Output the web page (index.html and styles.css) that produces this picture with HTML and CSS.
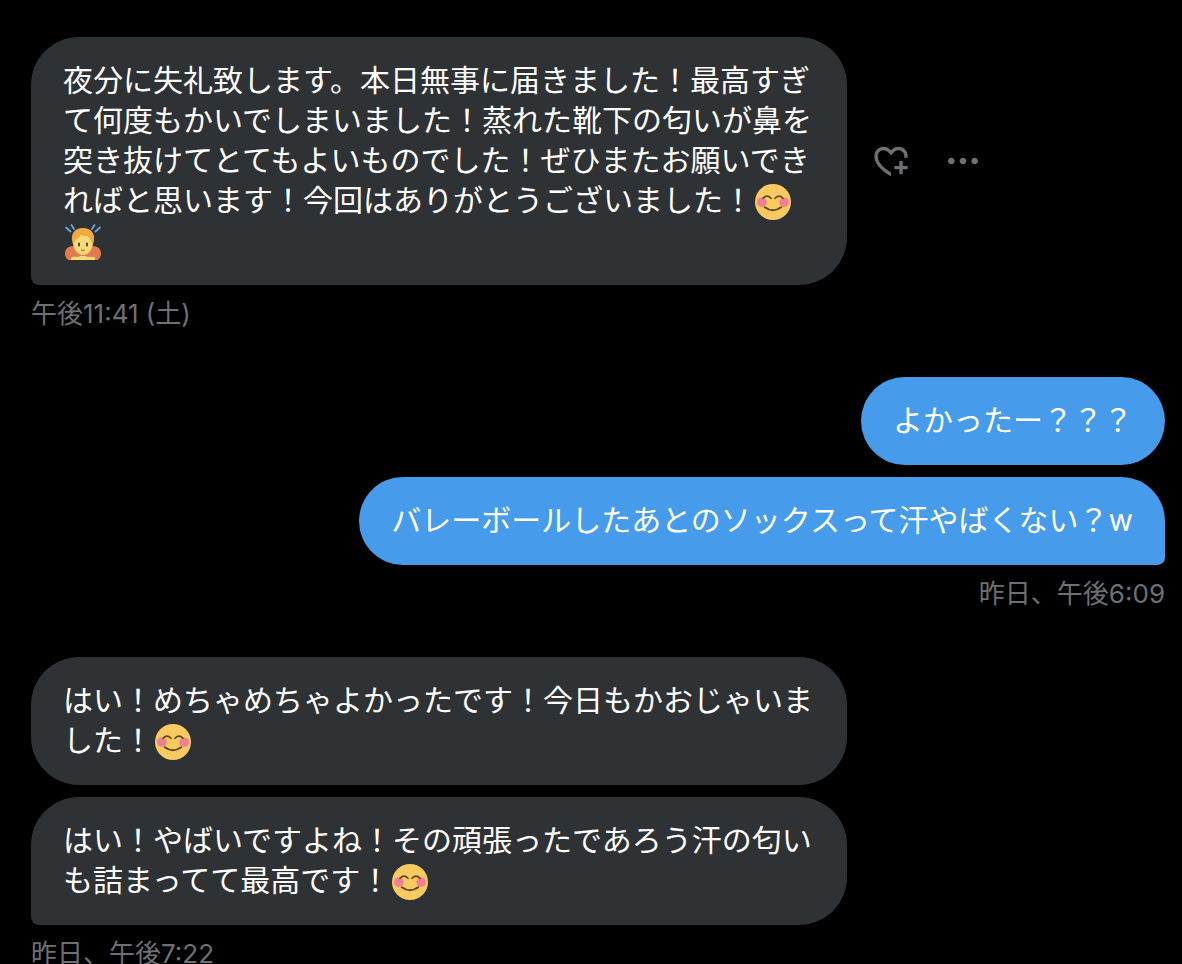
FILE: index.html
```html
<!DOCTYPE html>
<html lang="ja">
<head>
<meta charset="utf-8">
<meta name="viewport" content="width=device-width, initial-scale=1">
<title>メッセージ</title>
<link rel="stylesheet" href="styles.css">
</head>
<body>
<svg class="symbols" aria-hidden="true">
  <symbol id="smile" viewBox="0 0 36 36">
    <circle cx="18" cy="18" r="18" fill="#f8ca60"/>
    <circle cx="6.800" cy="18.200" r="4.800" fill="#ee7f96"/>
    <circle cx="29.200" cy="18.200" r="4.800" fill="#ee7f96"/>
    <g fill="none" stroke="#624710" stroke-linecap="round">
      <path d="M8 14.300Q12 10 16 14.300M20 14.300Q24 10 28 14.300" stroke-width="1.600"/>
      <path d="M9.800 23.300Q18 29.300 26.200 23.300" stroke-width="2"/>
    </g>
  </symbol>
  <symbol id="bow" viewBox="0 0 36 36">
    <path d="M9 22C3 22 0 25 0 29.500 0 33 2 36 4.500 36h27c2.500 0 4.500-3 4.500-6.500 0-4.500-3-7.500-9-7.500z" fill="#e27a50"/>
    <path d="M7 33c3-.500 6 .500 8.500-1h5c2.500 1.500 5.500.500 8.500 1 1.500.500 1.500 2 .500 3h-23c-1-1-1-2.500.500-3z" fill="#f8d978"/>
    <path d="M7.500 14C7.500 8 12 6 18 6s10.500 2 10.500 8c0 10-4 17-10.500 17S7.500 24 7.500 14z" fill="#f8d978"/>
    <path d="M7.500 18.500C5 9 10.500 4 18 4s13 5 10.500 14.500c-.500 1.500-1.500 1-2-.500-.700-2.500-2-4.500-4.500-6-2.500.500-5-.500-6.500-1-1.500 3.500-5 4-6 7-.500 1.500-1.500 2-2 .500z" fill="#f2aa45"/>
    <path d="M14 19.500v2M22 19.500v2" stroke="#624720" stroke-width="2" stroke-linecap="round"/>
    <path d="M16.500 26q1.500.900 3 0" fill="none" stroke="#bc7a3b" stroke-width="1.200" stroke-linecap="round"/>
    <path d="M1 3.500l4.500 4M6.500 1l2.500 4M35 3.500l-4.500 4M29.500 1l-2.500 4" stroke="#69a5e2" stroke-width="1.800" stroke-linecap="round"/>
  </symbol>
</svg>
<main class="thread">
  <section class="group">
    <div class="row">
      <p class="bubble tail">夜分に失礼致します。本日無事に届きました！最高すぎて何度もかいでしまいました！蒸れた靴下の匂いが鼻を突き抜けてとてもよいものでした！ぜひまたお願いできればと思います！今回はありがとうございました！<svg class="emoji" role="img" aria-label="笑顔"><use href="#smile"/></svg><wbr><svg class="emoji" role="img" aria-label="お辞儀"><use href="#bow"/></svg></p>
      <div class="actions">
        <button class="action" type="button" aria-label="リアクションを追加">
          <svg class="icon" viewBox="0 0 24 24" aria-hidden="true"><path d="M17 12v3h-2.998v2h3v3h2v-3h3v-2h-3.001v-3H17zm-5 6.839c-3.871-2.34-6.053-4.639-7.127-6.609-1.112-2.04-1.031-3.7-.479-4.82.561-1.13 1.667-1.84 2.91-1.91 1.222-.06 2.68.51 3.892 2.16l.806 1.09.805-1.09c1.211-1.65 2.668-2.22 3.89-2.16 1.242.07 2.347.78 2.908 1.91.334.677.49 1.554.321 2.59h2.011c.153-1.283-.039-2.469-.539-3.48-.887-1.79-2.647-2.91-4.601-3.01-1.65-.09-3.367.56-4.796 2.01-1.43-1.45-3.147-2.1-4.798-2.01-1.954.1-3.714 1.22-4.601 3.01-.896 1.81-.846 4.17.514 6.67 1.353 2.48 4.003 5.12 8.382 7.67l.502.299v-2.32z"/></svg>
        </button>
        <button class="action" type="button" aria-label="その他">
          <svg class="icon" viewBox="0 0 24 24" aria-hidden="true"><path d="M3 12c0-1.100.9-2 2-2s2 .9 2 2-.9 2-2 2-2-.9-2-2zm9 2c1.100 0 2-.9 2-2s-.9-2-2-2-2 .9-2 2 .9 2 2 2zm7 0c1.100 0 2-.9 2-2s-.9-2-2-2-2 .9-2 2 .9 2 2 2z"/></svg>
        </button>
      </div>
    </div>
    <time class="stamp">午後11:41 (土)</time>
  </section>
  <section class="group sent">
    <div class="row"><p class="bubble">よかったー？？？</p></div>
    <div class="row"><p class="bubble tail">バレーボールしたあとのソックスって汗やばくない？w</p></div>
    <time class="stamp">昨日、午後6:09</time>
  </section>
  <section class="group">
    <div class="row"><p class="bubble">はい！めちゃめちゃよかったです！今日もかおじゃいました！<svg class="emoji" role="img" aria-label="笑顔"><use href="#smile"/></svg></p></div>
    <div class="row"><p class="bubble tail">はい！やばいですよね！その頑張ったであろう汗の匂いも詰まってて最高です！<svg class="emoji" role="img" aria-label="笑顔"><use href="#smile"/></svg></p></div>
    <time class="stamp">昨日、午後7:22</time>
  </section>
</main>
</body>
</html>
```
FILE: styles.css
```css
* {
  box-sizing: border-box;
}

html {
  background: #000;
}

body {
  margin: 0;
  font-family: Inter, "Noto Sans CJK JP", sans-serif;
  color: #fff;
}

.symbols {
  position: absolute;
  width: 0;
  height: 0;
}

.thread {
  display: flex;
  flex-direction: column;
  gap: 46px;
  height: 100vh;
  padding: 37px 17px 0 31px;
  overflow: hidden;
}

.group {
  display: flex;
  flex-direction: column;
  flex-shrink: 0;
  gap: 12px;
}

.row {
  display: flex;
  align-items: center;
  gap: 24px;
}

.sent .row {
  justify-content: flex-end;
}

.bubble {
  max-width: 72%;
  margin: 0;
  padding: 23px 32px 25px;
  border-radius: 48px;
  background: #2f3235;
  font-size: 30px;
  line-height: 40px;
}

.bubble.tail {
  border-bottom-left-radius: 8px;
}

.sent .bubble {
  max-width: 80%;
  background: #469cea;
}

.sent .bubble.tail {
  border-bottom-left-radius: 48px;
  border-bottom-right-radius: 8px;
}

.emoji {
  width: 36px;
  height: 36px;
  margin: 0 2px;
  vertical-align: -9px;
}

.actions {
  display: flex;
  gap: 32px;
}

.action {
  display: flex;
  padding: 0;
  border: 0;
  background: none;
  color: #6e7073;
  cursor: pointer;
}

.icon {
  width: 40px;
  height: 40px;
  fill: currentColor;
}

.stamp {
  color: #6e7073;
  font-size: 26px;
  line-height: 34px;
}

.sent .stamp {
  text-align: right;
}
```
